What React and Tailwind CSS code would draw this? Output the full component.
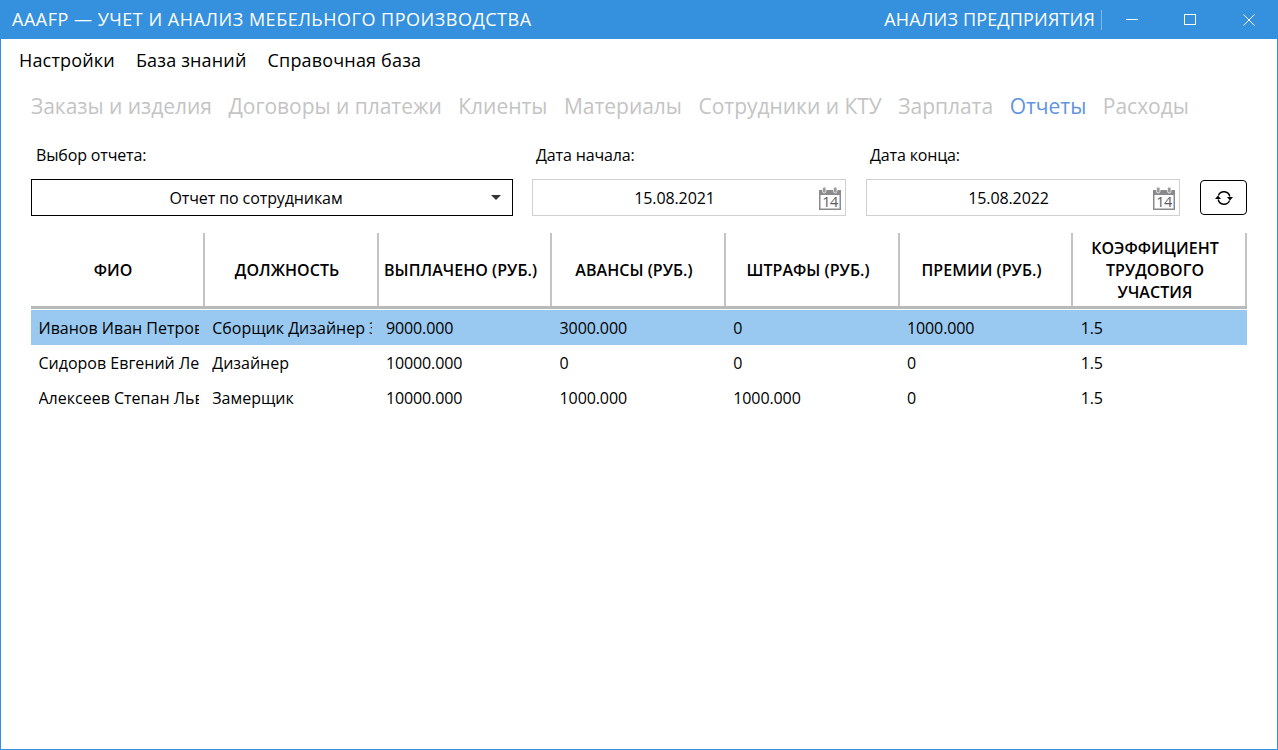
const tabs = ['Заказы и изделия', 'Договоры и платежи', 'Клиенты', 'Материалы', 'Сотрудники и КТУ', 'Зарплата', 'Отчеты', 'Расходы']
const columns = ['ФИО', 'ДОЛЖНОСТЬ', 'ВЫПЛАЧЕНО (РУБ.)', 'АВАНСЫ (РУБ.)', 'ШТРАФЫ (РУБ.)', 'ПРЕМИИ (РУБ.)', 'КОЭФФИЦИЕНТ ТРУДОВОГО УЧАСТИЯ']
const rows = [
  ['Иванов Иван Петрович', 'Сборщик Дизайнер Замерщик', '9000.000', '3000.000', '0', '1000.000', '1.5'],
  ['Сидоров Евгений Леонидович', 'Дизайнер', '10000.000', '0', '0', '0', '1.5'],
  ['Алексеев Степан Львович', 'Замерщик', '10000.000', '1000.000', '1000.000', '0', '1.5'],
]

function CalendarIcon() {
  return (
    <svg width="24" height="24" viewBox="0 0 24 24" className="shrink-0">
      <path d="M1.750 4.750h20.500v18.500H1.750z" fill="#fff" stroke="#8a8a8a" strokeWidth="1.500" />
      <path d="M1 4h22v5H1z" fill="#8a8a8a" />
      <rect x="4.500" y="1" width="3.500" height="6" rx="1.700" fill="#9a9a9a" stroke="#fff" strokeWidth="0.700" />
      <rect x="15.500" y="1" width="3.500" height="6" rx="1.700" fill="#9a9a9a" stroke="#fff" strokeWidth="0.700" />
      <text x="12" y="21" textAnchor="middle" fontSize="14.500" letterSpacing="-0.500" fill="#5c5c5c" fontFamily="Open Sans, sans-serif">14</text>
    </svg>
  )
}

function DateField({ value }) {
  return (
    <div className="relative flex h-[37px] w-[314px] items-center justify-center border border-[#d0d0d0] bg-white pr-[29px]">
      <span className="text-[16px] tracking-[-0.1px] text-black">{value}</span>
      <span className="absolute right-[3px] top-[6px]"><CalendarIcon /></span>
    </div>
  )
}

export default function App() {
  return (
    <div className="flex h-[750px] flex-col border-x border-b border-[#3590dd] bg-white font-['Open_Sans',sans-serif] text-black">
      <header className="flex h-[39px] shrink-0 items-center justify-between bg-[#3590dd] pl-[11px] text-white">
        <p className="text-[18px] tracking-[0.51px]">АААFP — УЧЕТ И АНАЛИЗ МЕБЕЛЬНОГО ПРОИЗВОДСТВА</p>
        <div className="flex items-center">
          <p className="text-[18px] tracking-[0.17px]">АНАЛИЗ ПРЕДПРИЯТИЯ</p>
          <span className="ml-[6px] h-[20px] w-px bg-[#7db9ea]" />
          <div className="flex w-[175px] items-center">
            <span className="ml-[24px] h-px w-[12px] bg-white" />
            <span className="ml-[46px] h-[11px] w-[12px] border border-white" />
            <svg width="12" height="12" viewBox="0 0 12 12" className="ml-[47px]" fill="none" stroke="#fff">
              <path d="M.5.5l11 11M11.500.5l-11 11" />
            </svg>
          </div>
        </div>
      </header>

      <nav className="flex gap-[21px] pl-[18px] pt-[8px] text-[18px] leading-[26px] tracking-[0.17px]">
        <span>Настройки</span>
        <span>База знаний</span>
        <span>Справочная база</span>
      </nav>

      <div className="flex gap-[16.6px] pl-[30px] pt-[18px] text-[21px] leading-[30px] tracking-[-0.03px] text-[#c4c4c4]">
        {tabs.map((tab) => (
          <span key={tab} className={tab === 'Отчеты' ? 'text-[#5f94e0]' : ''}>{tab}</span>
        ))}
      </div>

      <main className="flex flex-col px-[30px]">
        <div className="mt-[21px] flex h-[25px] items-center text-[16px] tracking-[-0.15px]">
          <span className="ml-[5px] w-[500px]">Выбор отчета:</span>
          <span className="w-[334px]">Дата начала:</span>
          <span>Дата конца:</span>
        </div>

        <div className="mt-[12px] flex items-center">
          <div className="relative flex h-[37px] w-[482px] items-center justify-center border border-black pr-[32px]">
            <span className="text-[16px] tracking-[-0.1px]">Отчет по сотрудникам</span>
            <span className="absolute right-[11px] top-[15px] border-x-[5px] border-t-[5px] border-x-transparent border-t-[#333]" />
          </div>
          <div className="ml-[19px]"><DateField value="15.08.2021" /></div>
          <div className="ml-[20px]"><DateField value="15.08.2022" /></div>
          <button className="ml-[20px] flex h-[35px] w-[47px] items-center justify-center rounded-[4px] border border-black">
            <svg width="18" height="16" viewBox="0 0 18 16" fill="none" stroke="#000" strokeWidth="1.400">
              <path d="M3.400 5.500A6 6 0 0 1 14.800 6.500M14.600 10.500A6 6 0 0 1 3.200 9.500" />
              <path d="M12 7h6l-3 3.500zM6 9H0l3-3.500z" fill="#000" stroke="none" />
            </svg>
          </button>
        </div>

        <div className="mt-[17px] w-[1216px]">
          <div className="grid h-[73px] grid-cols-[174px_174px_173px_174px_174px_173px_174px] text-[16px] font-semibold leading-[22px] tracking-[0.05px]">
            {columns.map((col) => (
              <div key={col} className="flex items-center justify-center border-r-2 border-[#c4c4c4] pr-[8px] text-center">
                <span className={col.startsWith('КОЭФ') ? 'w-[140px]' : ''}>{col}</span>
              </div>
            ))}
          </div>
          <div className="h-[3px] bg-[#b9b9b9]" />
          <div className="mt-px">
            {rows.map((row, i) => (
              <div
                key={row[0]}
                className={`grid h-[35px] grid-cols-[173.7px_173.7px_173.7px_173.7px_173.7px_173.7px_173.8px] items-center text-[16px] ${i === 0 ? 'bg-[#99c9f0]' : ''}`}
              >
                {row.map((cell, j) => (
                  <div key={j} className={`ml-[7.5px] mr-[6px] overflow-hidden whitespace-nowrap ${j > 1 ? 'tracking-[-0.1px]' : ''}`}>{cell}</div>
                ))}
              </div>
            ))}
          </div>
        </div>
      </main>
    </div>
  )
}
